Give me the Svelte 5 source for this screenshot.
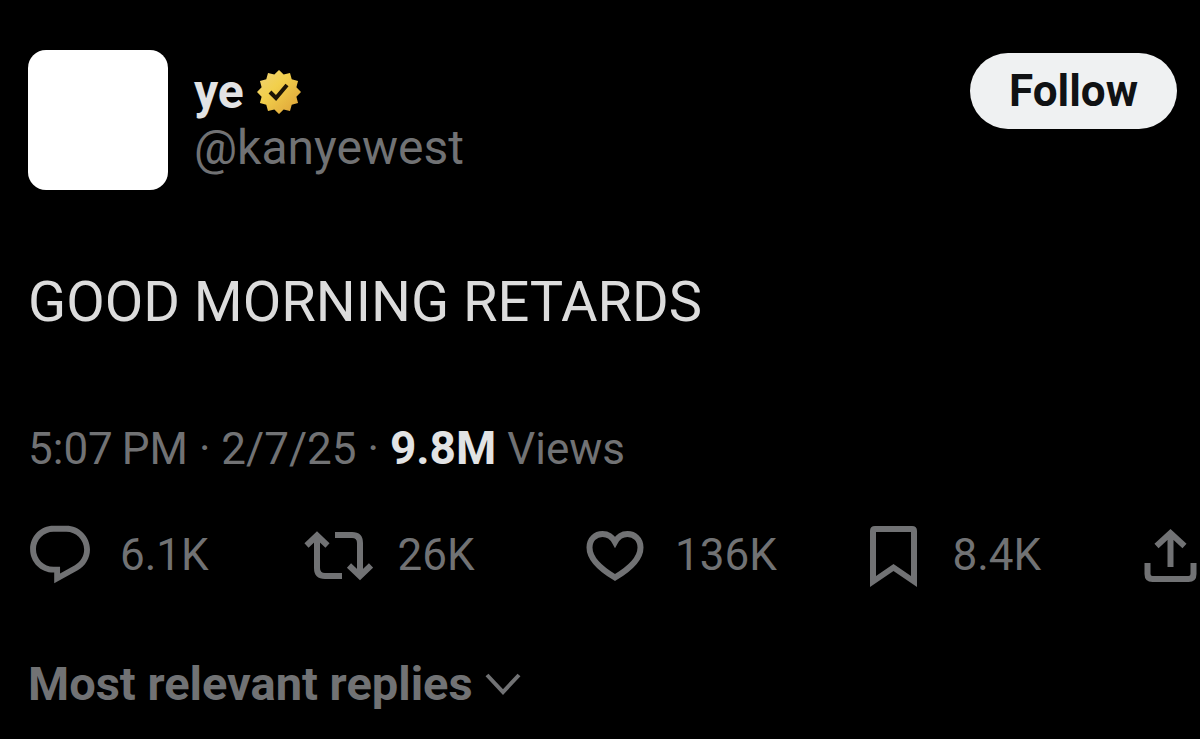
<script lang="ts">
  const post = {
    name: 'ye',
    handle: '@kanyewest',
    text: 'GOOD MORNING RETARDS',
    time: '5:07\u2009PM',
    date: '2/7/25',
    views: '9.8M',
  };

  const actions = [
    { id: 'reply', label: 'Reply', count: '6.1K' },
    { id: 'repost', label: 'Repost', count: '26K' },
    { id: 'like', label: 'Like', count: '136K' },
    { id: 'bookmark', label: 'Bookmark', count: '8.4K' },
  ];

  // twelve-pointed seal
  const seal = Array.from({ length: 24 }, (_, i) => {
    const r = i % 2 ? 18 : 22;
    const a = (i * Math.PI) / 12 - Math.PI / 2;
    return `${(22 + r * Math.cos(a)).toFixed(2)},${(22 + r * Math.sin(a)).toFixed(2)}`;
  }).join(' ');
</script>

<article class="post">
  <header class="header">
    <div class="avatar"></div>
    <div class="author">
      <div class="name">
        <span>{post.name}</span>
        <svg class="badge" viewBox="0 0 44 44" role="img" aria-label="Verified">
          <defs>
            <linearGradient id="gold" x1="0" y1="0" x2="1" y2="1">
              <stop offset="0" stop-color="#efd27a" />
              <stop offset="0.4" stop-color="#f2d04c" />
              <stop offset="1" stop-color="#dc9e36" />
            </linearGradient>
          </defs>
          <polygon points={seal} fill="url(#gold)" />
          <path d="M13 22l6 6 11-13" fill="none" stroke="#1c1405" stroke-width="4" />
        </svg>
      </div>
      <a class="handle" href="#profile">{post.handle}</a>
    </div>
    <button class="follow">Follow</button>
  </header>

  <p class="text">{post.text}</p>

  <p class="meta">
    {post.time} · {post.date} · <strong>{post.views}</strong> Views
  </p>

  <div class="actions">
    {#each actions as action (action.id)}
      <button class="action" aria-label={`${action.label} ${action.count}`}>
        <svg class="icon" viewBox="0 0 70 70" aria-hidden="true">
          {#if action.id === 'reply'}
            <path
              class="solid"
              transform="scale(2.92)"
              d="M1.751 10c0-4.42 3.584-8 8.005-8h4.366c4.49 0 8.129 3.64 8.129 8.13 0 2.96-1.607 5.68-4.196 7.11l-8.054 4.46v-3.69h-.067c-4.49.1-8.183-3.51-8.183-8.01zm8.005-6c-3.317 0-6.005 2.69-6.005 6 0 3.37 2.77 6.08 6.138 6.01l.351-.01h1.761v2.3l5.087-2.81c1.951-1.08 3.163-3.13 3.163-5.36 0-3.39-2.744-6.13-6.129-6.13H9.756z"
            />
          {:else if action.id === 'repost'}
            <path d="M3.500 25.500L14 15.500l10.500 10M14 16v32q0 8 8 8h17" />
            <path d="M32 15h17q8 0 8 8v32M46 45.500l11 10.500 11-10.500" />
          {:else if action.id === 'like'}
            <path
              d="M35 57.500C19 48 9.500 38 9.500 27.500 9.500 19 15.500 14 22.500 14c5 0 9.500 2.500 12.500 8 3-5.500 7.500-8 12.500-8 7 0 13 5 13 13.500C60.500 38 51 48 35 57.500z"
            />
          {:else}
            <path
              class="solid"
              fill-rule="evenodd"
              d="M12 67V11q0-5 5-5h37q5 0 5 5v56L35.500 51zM18 12v44l17.500-12L53 56V12z"
            />
          {/if}
        </svg>
        <span>{action.count}</span>
      </button>
    {/each}
    <button class="action" aria-label="Share">
      <svg class="icon icon-share" viewBox="0 0 65 70" aria-hidden="true">
        <path d="M21.500 26L35.500 13l14 13M35.500 13v34" />
        <path d="M12.500 43v11q0 5 5 5h36q5 0 5-5V43" />
      </svg>
    </button>
  </div>

  <button class="sort">
    <span>Most relevant replies</span>
    <svg class="chevron" viewBox="0 0 36 24" aria-hidden="true">
      <path d="M2 3l16 17L34 3" />
    </svg>
  </button>
</article>

<style>
  :global(body) {
    margin: 0;
    background: #000;
  }

  .post {
    padding: 50px 0 26px 28px;
    font-family: Roboto, 'Liberation Sans', sans-serif;
    font-size: 44px;
    line-height: 56px;
    color: #717274;
  }

  button {
    padding: 0;
    border: none;
    background: none;
    color: inherit;
    font: inherit;
    cursor: pointer;
  }

  .header {
    display: flex;
    align-items: center;
    gap: 26px;
    padding-right: 23px;
  }

  .avatar {
    width: 140px;
    height: 140px;
    border-radius: 18px;
    background: #fff;
  }

  .author {
    flex: 1;
    font-size: 48px;
  }

  .name {
    display: flex;
    align-items: center;
    gap: 13px;
    font-weight: 700;
    color: #e2e3e4;
  }

  .badge {
    width: 44px;
    height: 44px;
  }

  .handle {
    display: block;
    color: inherit;
    text-decoration: none;
  }

  .follow {
    align-self: flex-start;
    margin-top: 3px;
    padding: 10px 39px;
    border-radius: 38px;
    background: #eff1f2;
    color: #101214;
    font-weight: 700;
  }

  .text {
    margin: 80px 0 0;
    font-size: 56px;
    line-height: 64px;
    color: #dcdcdc;
  }

  .meta {
    margin: 86px 0 0;
  }

  .meta strong {
    font-size: 46px;
    font-weight: 700;
    color: #e2e3e4;
  }

  .actions {
    display: grid;
    grid-template-columns: repeat(4, 1fr) 65px;
    margin: 43px 0 0 -3px;
  }

  .action {
    display: flex;
    align-items: center;
    gap: 25px;
  }

  .icon {
    width: 70px;
    height: 70px;
  }

  .icon-share {
    width: 65px;
  }

  .icon path,
  .chevron path {
    fill: none;
    stroke: currentColor;
    stroke-width: 6;
  }

  .icon .solid {
    fill: currentColor;
    stroke: none;
  }

  .sort {
    display: flex;
    align-items: center;
    gap: 12px;
    margin-top: 66px;
    font-size: 47px;
    font-weight: 700;
  }

  .chevron {
    width: 36px;
    height: 24px;
  }

  .chevron path {
    stroke-width: 4;
  }
</style>
